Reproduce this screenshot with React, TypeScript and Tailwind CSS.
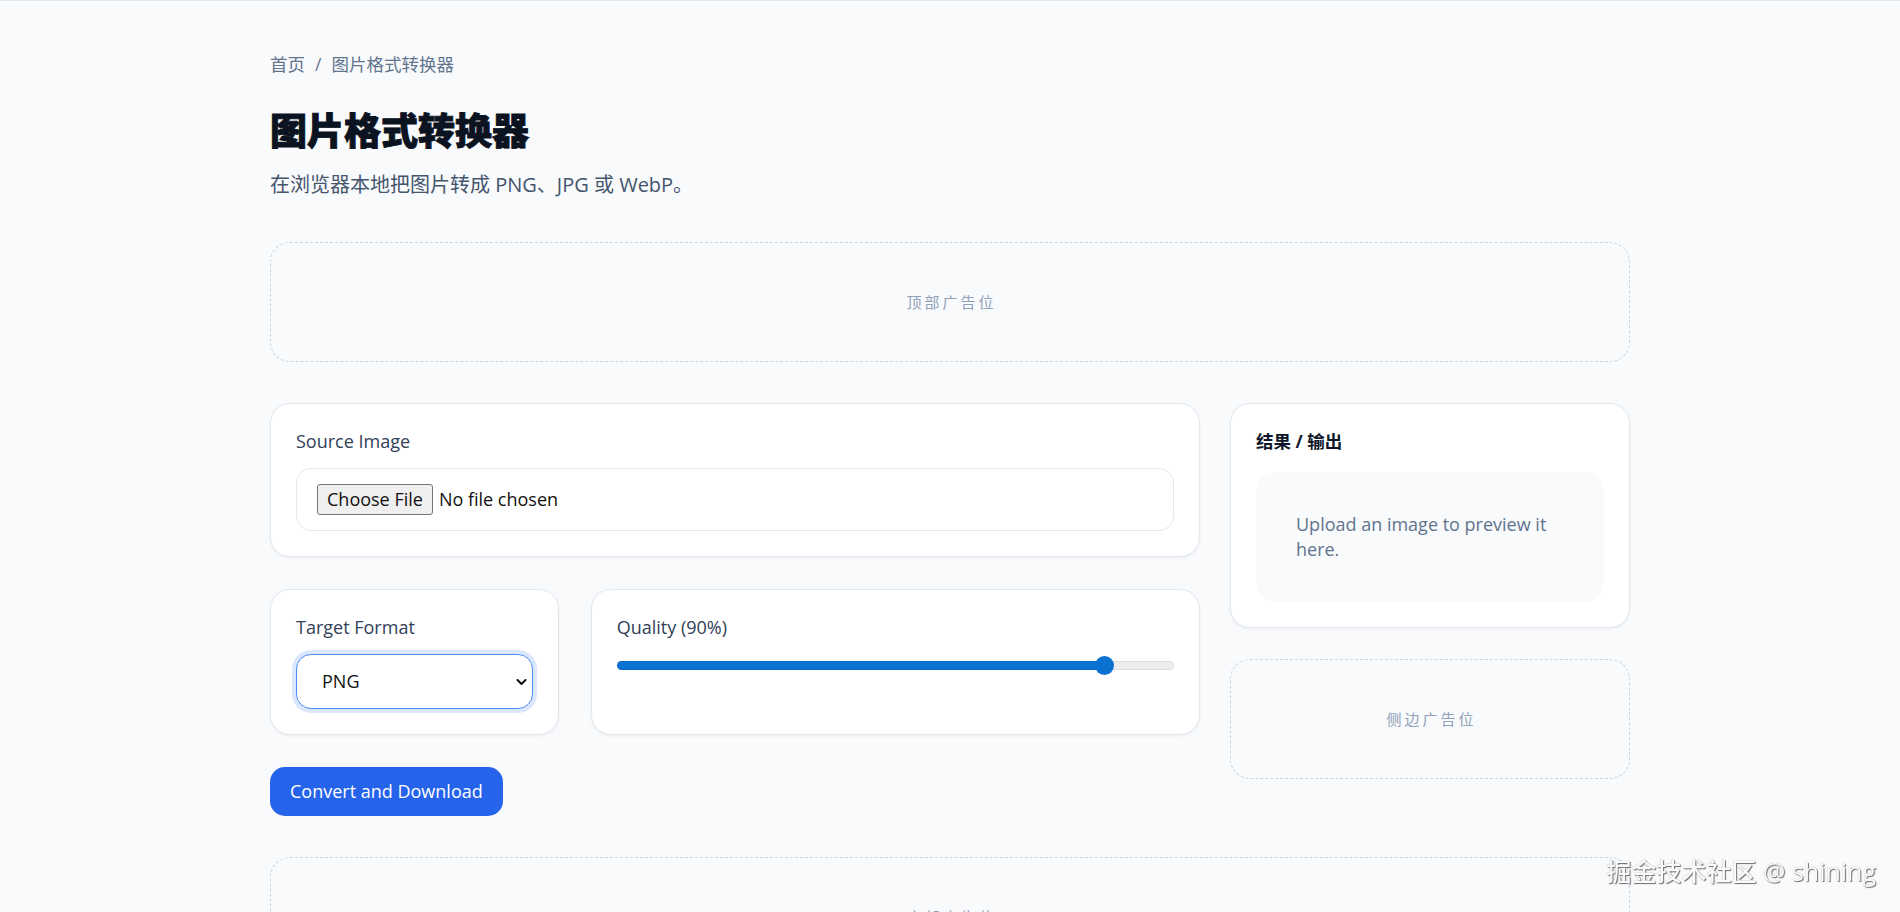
import React from "react";

const card =
  "rounded-[20px] border border-slate-200 bg-white p-[25px] shadow-[0_1px_3px_rgba(15,23,42,0.06)]";

function AdSlot({ label, className = "" }: { label: string; className?: string }) {
  return (
    <div
      className={`flex h-[120px] items-center justify-center rounded-[20px] border border-dashed border-slate-300 pl-[3px] text-[15px] tracking-[0.2em] text-slate-400 ${className}`}
    >
      {label}
    </div>
  );
}

export default function App() {
  return (
    <div className="min-h-screen bg-[#f8fafc] font-['Open_Sans','Noto_Sans_CJK_SC',sans-serif] text-slate-900">
      <div className="h-px bg-slate-200" />
      <main className="mx-auto w-[1360px] pt-[51px] pb-10">
        <nav className="flex items-center gap-[10px] text-[17.5px] leading-[25px] text-slate-500">
          <a href="#">首页</a>
          <span>/</span>
          <span>图片格式转换器</span>
        </nav>

        <h1 className="mt-[31px] text-[37px] font-black leading-[45px] text-[#0b1220] [-webkit-text-stroke:0.9px_#0b1220]">
          图片格式转换器
        </h1>
        <p className="mt-[17px] text-[20px] leading-[30px] text-slate-600">
          在浏览器本地把图片转成 PNG、JPG 或 WebP。
        </p>

        <AdSlot label="顶部广告位" className="mt-[42px]" />

        <div className="mt-[41px] grid grid-cols-[minmax(0,1fr)_400px] items-start gap-x-[30px]">
          <div className="flex flex-col gap-8">
            <section className={card}>
              <label className="mb-[14px] block text-[18px] leading-[25px] text-slate-700">
                Source Image
              </label>
              <input
                type="file"
                accept="image/*"
                className="block w-full rounded-[15px] border border-slate-200 bg-white px-[20px] py-[15px] text-[18px] leading-[25px] text-[#111] file:mr-[6px] file:rounded-[3px] file:border file:border-[#767676] file:bg-[#efefef] file:px-[9px] file:py-[2px] file:text-[#111]"
              />
            </section>

            <div className="grid grid-cols-3 gap-8">
              <section className={card}>
                <label className="block text-[18px] leading-[25px] text-slate-700">
                  Target Format
                </label>
                <div className="relative mt-[14px]">
                  <select
                    defaultValue="png"
                    className="block h-[55px] w-full appearance-none rounded-[15px] border border-[#4b8df8] bg-white pl-[25px] pr-8 text-[18px] text-[#111] outline-none ring-4 ring-[#dbe7fd]"
                  >
                    <option value="png">PNG</option>
                    <option value="jpg">JPG</option>
                    <option value="webp">WebP</option>
                  </select>
                  <svg
                    className="pointer-events-none absolute right-[6px] top-1/2 -translate-y-1/2"
                    width="11"
                    height="8"
                    viewBox="0 0 11 8"
                    fill="none"
                  >
                    <path
                      d="M1.5 2 5.5 6 9.5 2"
                      stroke="#111"
                      strokeWidth="2"
                      strokeLinecap="round"
                      strokeLinejoin="round"
                    />
                  </svg>
                </div>
              </section>

              <section className={`${card} col-span-2`}>
                <label className="block text-[18px] leading-[25px] text-slate-700">
                  Quality (90%)
                </label>
                <div className="mt-[16px] h-[19px]">
                  <input
                    type="range"
                    min={10}
                    max={100}
                    defaultValue={90}
                    className="block h-[19px] w-full cursor-pointer appearance-none bg-transparent [&::-webkit-slider-runnable-track]:h-[9px] [&::-webkit-slider-runnable-track]:rounded-full [&::-webkit-slider-runnable-track]:bg-[linear-gradient(to_right,#0b72d1_0%,#0b72d1_87.6%,#ececec_87.6%,#ececec_100%)] [&::-webkit-slider-runnable-track]:shadow-[inset_0_0_0_1px_rgba(0,0,0,0.06)] [&::-webkit-slider-thumb]:mt-[-5px] [&::-webkit-slider-thumb]:h-[19px] [&::-webkit-slider-thumb]:w-[19px] [&::-webkit-slider-thumb]:appearance-none [&::-webkit-slider-thumb]:rounded-full [&::-webkit-slider-thumb]:bg-[#0b72d1]"
                  />
                </div>
              </section>
            </div>

            <div>
              <button
                type="button"
                className="h-[49px] rounded-[15px] bg-[#2563eb] px-[20px] text-[18px] text-white hover:bg-blue-700"
              >
                Convert and Download
              </button>
            </div>
          </div>

          <aside className="flex flex-col gap-[31px]">
            <section className={card}>
              <h2 className="text-[17.5px] font-bold leading-[24px] text-slate-900">
                结果 / 输出
              </h2>
              <div className="mt-[19px] rounded-[20px] bg-slate-50 p-[40px] text-[18px] leading-[25px] text-slate-500">
                Upload an image to preview it here.
              </div>
            </section>
            <AdSlot label="侧边广告位" />
          </aside>
        </div>

        <AdSlot label="底部广告位" className="mt-[41px]" />
      </main>

      <div className="pointer-events-none fixed right-[24px] top-[855px] text-[25px] font-medium leading-[32px] text-[#fafafa] [text-shadow:1px_1px_1px_rgba(0,0,0,0.55),0_0_1px_rgba(0,0,0,0.35)]">
        掘金技术社区 @ shining
      </div>
    </div>
  );
}
